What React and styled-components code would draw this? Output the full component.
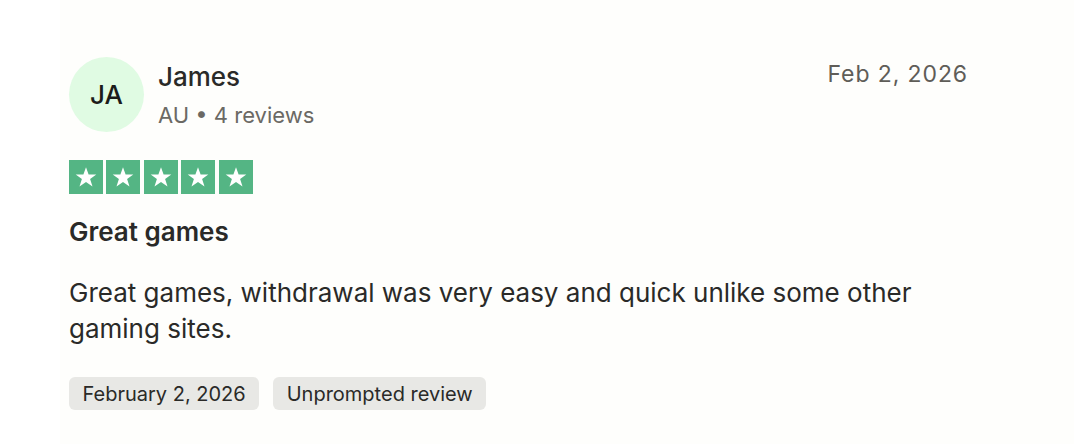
import React from 'react'
import styled, { createGlobalStyle } from 'styled-components'

const GlobalStyle = createGlobalStyle`
  html, body {
    margin: 0;
    background: #ffffff;
  }
  body {
    font-family: Inter, 'Liberation Sans', sans-serif;
    -webkit-font-smoothing: antialiased;
  }
`

const Card = styled.article`
  width: 1014px;
  margin-left: 60px;
  min-height: 444px;
  box-sizing: border-box;
  padding: 57px 106px 0 9px;
  background: #fefefc;
  color: #2a2a28;
`

const Header = styled.header`
  display: flex;
  align-items: flex-start;
  gap: 14px;
`

const Avatar = styled.div`
  width: 75px;
  height: 75px;
  border-radius: 50%;
  background: #e0fbe3;
  color: #1c1c1a;
  display: flex;
  align-items: center;
  justify-content: center;
  font-size: 26px;
  font-weight: 500;
  flex-shrink: 0;
`

const Who = styled.div`
  display: flex;
  flex-direction: column;
  flex: 1;
  padding-top: 5px;
`

const Name = styled.div`
  font-size: 26px;
  font-weight: 500;
  line-height: 30px;
  color: #2a2a28;
`

const Meta = styled.div`
  margin-top: 10px;
  font-size: 22px;
  line-height: 26px;
  color: #6b6964;
`

const Posted = styled.time`
  margin-top: 3px;
  font-size: 23px;
  line-height: 28px;
  color: #5f5d58;
  letter-spacing: 0.9px;
`

const Stars = styled.div`
  display: flex;
  gap: 3.4px;
  margin-top: 28px;
`

const StarBox = styled.span`
  width: 34px;
  height: 34px;
  background: ${p => (p.$on ? '#54b584' : '#dcdcd6')};
  display: flex;
  align-items: center;
  justify-content: center;
`

const Title = styled.h2`
  margin: 23px 0 0;
  font-size: 26px;
  font-weight: 600;
  line-height: 30px;
  color: #2a2a28;
`

const Body = styled.p`
  margin: 28px 0 0;
  font-size: 26px;
  line-height: 36px;
  color: #2a2a28;
`

const Tags = styled.div`
  display: flex;
  gap: 14px;
  margin-top: 30px;
`

const Tag = styled.span`
  background: #e8e8e5;
  border-radius: 6px;
  padding: 0 13.5px;
  height: 33px;
  display: inline-flex;
  align-items: center;
  font-size: 20px;
  color: #2a2a28;
`

const Star = () => (
  <svg width="24" height="24" viewBox="0 0 24 24">
    <path
      d="M12 2.2l2.6 7.3h7.7l-6.2 4.6 2.4 7.5L12 17l-6.5 4.6 2.4-7.5-6.2-4.6h7.7z"
      fill="#ffffff"
    />
  </svg>
)

export default function App() {
  const rating = 5
  return (
    <>
      <GlobalStyle />
      <Card>
        <Header>
          <Avatar>JA</Avatar>
          <Who>
            <Name>James</Name>
            <Meta>AU • 4 reviews</Meta>
          </Who>
          <Posted>Feb 2, 2026</Posted>
        </Header>
        <Stars>
          {[1, 2, 3, 4, 5].map(n => (
            <StarBox key={n} $on={n <= rating}>
              <Star />
            </StarBox>
          ))}
        </Stars>
        <Title>Great games</Title>
        <Body>Great games, withdrawal was very easy and quick unlike some other gaming sites.</Body>
        <Tags>
          <Tag>February 2, 2026</Tag>
          <Tag>Unprompted review</Tag>
        </Tags>
      </Card>
    </>
  )
}
